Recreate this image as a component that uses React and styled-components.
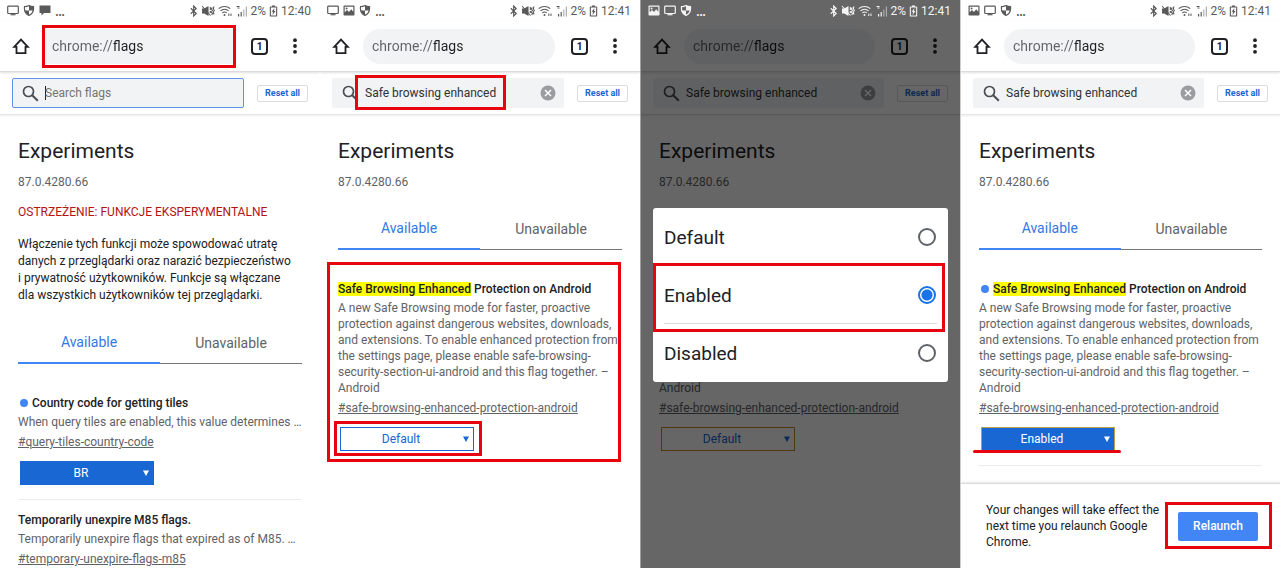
import styled, { createGlobalStyle } from "styled-components";
import { useId, useState } from "react";

function App() {
    return (
        <>
            <GlobalStyle />
            <Board>
                <Screen>
                    <StatusBar icons={["cast", "shield", "chat"]} time="12:40" />
                    <Toolbar marked />
                    <SearchBar value="" />
                    <Content>
                        <h1>Experiments</h1>
                        <Version>87.0.4280.66</Version>
                        <Warning>OSTRZEŻENIE: FUNKCJE EKSPERYMENTALNE</Warning>
                        <Blurb>
                            Włączenie tych funkcji może spowodować utratę danych z przeglądarki oraz
                            narazić bezpieczeństwo i&nbsp;prywatność użytkowników. Funkcje są włączane
                            dla&nbsp;wszystkich użytkowników tej przeglądarki.
                        </Blurb>
                        <Tabs />
                        <Flag>
                            <h2><Dot />Country code for getting tiles</h2>
                            <p>When query tiles are enabled, this value determines …</p>
                            <a href="#query-tiles-country-code">#query-tiles-country-code</a>
                            <FlagSelect value="BR" options={["BR"]} filled />
                        </Flag>
                        <Divider />
                        <Flag $next>
                            <h2>Temporarily unexpire M85 flags.</h2>
                            <p>Temporarily unexpire flags that expired as of M85. …</p>
                            <a href="#temporary-unexpire-flags-m85">#temporary-unexpire-flags-m85</a>
                        </Flag>
                    </Content>
                </Screen>

                <Screen>
                    <StatusBar icons={["cast", "image", "shield"]} time="12:41" />
                    <Toolbar />
                    <SearchBar value="Safe browsing enhanced" marked />
                    <Content>
                        <h1>Experiments</h1>
                        <Version>87.0.4280.66</Version>
                        <Tabs />
                        <SafeBrowsing marked value="Default" />
                    </Content>
                </Screen>

                <Screen $edge="#a0a0a0">
                    <StatusBar icons={["image", "cast", "shield"]} time="12:41" light />
                    <Toolbar />
                    <SearchBar value="Safe browsing enhanced" />
                    <Content>
                        <h1>Experiments</h1>
                        <Version>87.0.4280.66</Version>
                        <Tabs />
                        <SafeBrowsing value="Default" outline="#c98a1c" />
                    </Content>
                    <Scrim>
                        <OptionDialog />
                    </Scrim>
                </Screen>

                <Screen $edge="#cfcfcf">
                    <StatusBar icons={["image", "cast", "shield"]} time="12:41" />
                    <Toolbar />
                    <SearchBar value="Safe browsing enhanced" />
                    <Content>
                        <h1>Experiments</h1>
                        <Version>87.0.4280.66</Version>
                        <Tabs />
                        <SafeBrowsing value="Enabled" outline="#b9a04a" filled changed />
                        <Divider />
                    </Content>
                    <RestartBar>
                        <p>Your changes will take effect the next time you relaunch Google Chrome.</p>
                        <Anchor>
                            <Relaunch>Relaunch</Relaunch>
                            <Mark $inset="-10px -14px -8px -13px" />
                        </Anchor>
                    </RestartBar>
                </Screen>
            </Board>
        </>
    );
}

export default App;

const statusIcons = {
    cast: (
        <svg width="12" height="11" viewBox="0 0 12 11" fill="none" stroke="currentColor">
            <rect x="0.7" y="1.2" width="10.6" height="7.3" rx="0.8" strokeWidth="1.2" />
            <path d="M3.5 9.7h5" strokeWidth="1.2" />
        </svg>
    ),
    shield: (
        <svg width="12" height="11" viewBox="0 0 12 11">
            <path
                d="M6 .6c1.500.9 2.800 1.100 4.500 1.100.5 4.200-1 7.200-4.500 8.700C2.500 8.900 1 5.900 1.500 1.700 3.200 1.700 4.500 1.500 6 .6z"
                fill="none" stroke="currentColor" strokeWidth="1.2"
            />
            <path d="M6 .6v5h4.400C10.700 4.200 10.700 2.800 10.500 1.700 9 1.700 7.400 1.500 6 .6zM6 5.600v4.800C3.500 9.300 2 7.500 1.600 5.600z" fill="currentColor" />
        </svg>
    ),
    chat: (
        <svg width="12" height="11" viewBox="0 0 12 11" fill="currentColor">
            <path d="M.5.500h11v7.500H5L2.500 10.500V8h-2z" />
        </svg>
    ),
    image: (
        <svg width="12" height="11" viewBox="0 0 12 11">
            <path
                fillRule="evenodd" fill="currentColor"
                d="M1.200.5h9.600q.7 0 .7.700v8.600q0 .7-.7.700H1.200q-.7 0-.7-.7V1.200q0-.7.7-.7zM1.700 1.700v5.600L4 5l2 2 2.200-2.800 2.100 2.600V1.700zM3.600 2.400a1 1 0 1 1 0 2 1 1 0 0 1 0-2z"
            />
        </svg>
    ),
};

function StatusBar({ icons, time, light }) {
    return (
        <Status $light={light}>
            <StatusLeft>
                {icons.map(name => <span key={name}>{statusIcons[name]}</span>)}
                <b>…</b>
            </StatusLeft>
            <StatusRight>
                <svg width="8" height="12" viewBox="0 0 8 12" fill="none" stroke="currentColor" strokeWidth="1.2">
                    <path d="M.8 3.200l5.400 5.300L3.700 11V1l2.500 2.500L.8 8.800" />
                </svg>
                <svg width="14" height="12" viewBox="0 0 14 12">
                    <path d="M1 3.500h2.200L7.500 1v10L3.200 8.500H1z" fill="currentColor" />
                    <path d="M1 1l8.500 9.500M9.300 2v3M9.300 6v2M11.200 2.500l-.8 1.500 1 1.500-1 1.500 1 1.500-.7 1.500M13 1.500l-.7 2 .9 2-.9 2 .7 2" fill="none" stroke="currentColor" strokeWidth="1.100" />
                </svg>
                <svg width="15" height="12" viewBox="0 0 15 12" fill="none" stroke="currentColor" strokeWidth="1.1">
                    <path d="M.7 3.700c3.300-3 8.300-3 11.600 0M2.500 5.800c2.300-2 5.700-2 8 0M4.300 7.900c1.300-1.100 3.100-1.100 4.400 0" />
                    <circle cx="6.500" cy="10" r="1" fill="currentColor" stroke="none" />
                    <path d="M10.800 8.500v2.500M13 8.500v2.500" strokeWidth="1" />
                </svg>
                <svg width="12" height="12" viewBox="0 0 12 12" fill="currentColor">
                    <path d="M.5 1h3v1h-3zM1.500 2.500h2v1h-2zM2 9h1.200v2.500H2zM4.600 7h1.200v4.500H4.600z" />
                    <path d="M7.200 4.500h1.200v7H7.200zM9.800 1.500H11v10H9.800z" opacity="0.5" />
                </svg>
                <time>2%</time>
                <svg width="9" height="12" viewBox="0 0 9 12">
                    <path
                        fillRule="evenodd" fill="currentColor"
                        d="M3 .5h3v1h1.500q.7 0 .7.700v8.600q0 .7-.7.700h-6q-.7 0-.7-.7V2.200q0-.7.7-.7H3zM1.900 2.600v7.800h5.200V2.600z"
                    />
                    <path d="M5.500 3L2.600 6.800h1.500L3.500 10l3-3.900H4.900z" fill="currentColor" />
                </svg>
                <time>{time}</time>
            </StatusRight>
        </Status>
    );
}

function Toolbar({ marked }) {
    return (
        <Bar>
            <IconButton aria-label="Home">
                <svg width="18" height="18" viewBox="0 0 18 18" fill="none" stroke="#202124" strokeWidth="1.800">
                    <path d="M2.200 9.800L9 2.600l6.800 7.200h-2.300v6.300h-9V9.800z" />
                </svg>
            </IconButton>
            <Omnibox $square={marked}>
                <input aria-label="Address" defaultValue="chrome://flags" />
                {marked && <Mark $inset="-4px -1px" />}
            </Omnibox>
            <IconButton aria-label="Tabs">
                <TabCount>1</TabCount>
            </IconButton>
            <IconButton aria-label="Menu">
                <svg width="4" height="16" viewBox="0 0 4 16" fill="#202124">
                    <circle cx="2" cy="2.200" r="1.900" />
                    <circle cx="2" cy="8" r="1.900" />
                    <circle cx="2" cy="13.800" r="1.900" />
                </svg>
            </IconButton>
        </Bar>
    );
}

function SearchBar({ value, marked }) {
    const [term, setTerm] = useState(value);

    return (
        <SearchRow>
            <SearchBox $focused={!value}>
                <svg width="17" height="17" viewBox="0 0 17 17" fill="none" stroke="#4a4d51" strokeWidth="1.700">
                    <circle cx="6.500" cy="6.500" r="5" />
                    <path d="M10.200 10.200l5.600 5.600" strokeWidth="2" />
                </svg>
                <Anchor $grow>
                    {!value && <Caret />}
                    <input
                        aria-label="Search flags"
                        placeholder="Search flags"
                        value={term}
                        onChange={(e) => setTerm(e.target.value)}
                    />
                    {marked && <Mark $inset="-10px 28px -9px -10px" />}
                </Anchor>
                {value && (
                    <IconButton aria-label="Clear search" onClick={() => setTerm("")}>
                        <svg width="16" height="16" viewBox="0 0 16 16">
                            <circle cx="8" cy="8" r="7.500" fill="#9a9c9f" />
                            <path d="M5 5l6 6M11 5l-6 6" stroke="#fff" strokeWidth="1.500" />
                        </svg>
                    </IconButton>
                )}
            </SearchBox>
            <ResetButton>Reset all</ResetButton>
        </SearchRow>
    );
}

function Tabs() {
    const [tab, setTab] = useState("Available");

    return (
        <TabList role="tablist">
            {["Available", "Unavailable"].map(name => (
                <Tab key={name} role="tab" aria-selected={tab === name} $active={tab === name} onClick={() => setTab(name)}>
                    {name}
                </Tab>
            ))}
        </TabList>
    );
}

function SafeBrowsing({ value, marked, filled, changed, outline }) {
    return (
        <Flag>
            <h2>
                {changed && <Dot />}
                <mark>Safe Browsing Enhanced</mark> Protection on Android
            </h2>
            <p>
                A new Safe Browsing mode for faster, proactive protection against dangerous websites,
                downloads, and extensions. To enable enhanced protection from the settings page, please
                enable safe-browsing-security-section-ui-android and this flag together. – Android
            </p>
            <a href="#safe-browsing-enhanced-protection-android">#safe-browsing-enhanced-protection-android</a>
            <FlagSelect
                value={value}
                options={["Default", "Enabled", "Disabled"]}
                filled={filled}
                outline={outline}
                marked={marked}
                underlined={changed}
            />
            {marked && <Mark $inset="-18px 1px -11px -11px" />}
        </Flag>
    );
}

function FlagSelect({ value, options, filled, outline, marked, underlined }) {
    return (
        <SelectWrap $filled={filled}>
            <select aria-label="Flag state" defaultValue={value} style={{ borderColor: outline }}>
                {options.map(option => <option key={option}>{option}</option>)}
            </select>
            <svg width="6" height="6" viewBox="0 0 6 6" fill="currentColor">
                <path d="M0 .5h6L3 6z" />
            </svg>
            {marked && <Mark $inset="-6px -8px -5px -6px" />}
            {underlined && <Underline />}
        </SelectWrap>
    );
}

function OptionDialog() {
    const [selected, setSelected] = useState("Enabled");
    const id = useId();

    return (
        <Dialog role="dialog" aria-label="Flag state">
            {["Default", "Enabled", "Disabled"].map(option => (
                <Option key={option}>
                    <span>{option}</span>
                    <input
                        type="radio"
                        name={id}
                        checked={selected === option}
                        onChange={() => setSelected(option)}
                    />
                    {option === "Enabled" && <Mark $inset="-3px 3px -8px 0" />}
                </Option>
            ))}
        </Dialog>
    );
}

const GlobalStyle = createGlobalStyle`
    * {
        box-sizing: border-box;
    }
    body {
        margin: 0;
        background-color: #fff;
        color: #202124;
        font-family: Roboto, "Liberation Sans", sans-serif;
        font-size: 12px;
    }
    h1, h2, p {
        margin: 0;
    }
    button, input, select {
        font: inherit;
    }
    svg {
        display: block;
        flex-shrink: 0;
    }
`;

const Board = styled.main`
    display: grid;
    grid-template-columns: repeat(4, 1fr);
    min-height: 100vh;
`;

const Screen = styled.section`
    position: relative;
    display: flex;
    flex-direction: column;
    min-width: 0;
    overflow: clip;
    background-color: #fff;
    border-left: ${(props) => (props.$edge ? `1px solid ${props.$edge}` : "none")};
`;

const Status = styled.div`
    position: relative;
    z-index: 3;
    height: 21px;
    padding: 0 9px 0 7px;
    display: flex;
    justify-content: space-between;
    align-items: center;
    color: ${(props) => (props.$light ? "#f4f4f4" : "#5a5a5a")};
`;

const StatusLeft = styled.div`
    display: flex;
    align-items: center;
    gap: 4px;

    b {
        font-size: 14px;
        font-weight: 500;
        line-height: 16px;
    }
`;

const StatusRight = styled.div`
    display: flex;
    align-items: center;
    gap: 3px;
`;

const Bar = styled.header`
    height: 51px;
    padding: 0 23px 0 12px;
    display: flex;
    align-items: center;
    border-bottom: 1px solid #dcdcdc;
    box-shadow: 0 1px 2px rgba(0, 0, 0, 0.12);
`;

const IconButton = styled.button`
    display: flex;
    align-items: center;
    justify-content: center;
    padding: 0;
    border: 0;
    background: none;
    cursor: pointer;
`;

const Omnibox = styled.div`
    position: relative;
    flex: 1;
    min-width: 0;
    height: 35px;
    margin: 0 16px 0 13px;
    padding: 0 9px;
    display: flex;
    align-items: center;
    border-radius: ${(props) => (props.$square ? "0" : "18px")};
    background-color: #f1f3f4;

    input {
        width: 100%;
        padding: 0;
        border: 0;
        outline: 0;
        font-size: 14px;
        color: #202124;
        background: linear-gradient(to right, #5f6368 62px, #202124 62px);
        background-clip: text;
        -webkit-text-fill-color: transparent;
    }
`;

const TabCount = styled.span`
    width: 17px;
    height: 17px;
    margin-right: 25px;
    display: flex;
    align-items: center;
    justify-content: center;
    border: 2px solid #202124;
    border-radius: 4px;
    font-size: 10px;
    font-weight: 700;
    color: #202124;
`;

const SearchRow = styled.div`
    height: 43px;
    padding: 0 12px;
    display: flex;
    align-items: center;
    gap: 13px;
    border-bottom: 1px solid #e4e4e4;
    box-shadow: 0 1px 2px rgba(0, 0, 0, 0.08);
`;

const SearchBox = styled.div`
    flex: 1;
    min-width: 0;
    height: 30px;
    padding: 0 7px 0 9px;
    display: flex;
    align-items: center;
    gap: 6px;
    border: 1px solid ${(props) => (props.$focused ? "#5b96e6" : "#f1f3f4")};
    border-radius: 2px;
    background-color: #f1f3f4;

    input {
        width: 100%;
        height: 16px;
        padding: 0;
        border: 0;
        outline: 0;
        background: none;
        color: #303134;
    }
    input::placeholder {
        color: #757575;
    }
`;

const Caret = styled.i`
    width: 1px;
    height: 14px;
    margin-right: -1px;
    background-color: #202124;
`;

const Anchor = styled.div`
    position: relative;
    display: flex;
    align-items: center;
    flex: ${(props) => (props.$grow ? "1" : "none")};
    min-width: 0;
`;

const ResetButton = styled.button`
    height: 17px;
    padding: 0 7px;
    border: 1px solid #dadce0;
    border-radius: 2px;
    background-color: transparent;
    color: #1967d2;
    font-size: 9px;
    font-weight: 700;
    line-height: 15px;
    white-space: nowrap;
`;

const Content = styled.div`
    padding: 22px 18px 0;

    h1 {
        font-size: 21px;
        font-weight: 400;
        line-height: 28px;
    }
`;

const Version = styled.p`
    margin-top: 9px;
    line-height: 16px;
    color: #5f6368;
`;

const Warning = styled.p`
    margin-top: 14px;
    line-height: 16px;
    color: #b31412;
`;

const Blurb = styled.p`
    margin-top: 16px;
    line-height: 17px;
`;

const TabList = styled.div`
    margin-top: 20px;
    display: grid;
    grid-template-columns: 1fr 1fr;
`;

const Tab = styled.button`
    height: 40px;
    padding: 0 0 2px;
    border: 0;
    border-bottom: ${(props) => (props.$active ? "2px solid #4285f4" : "1px solid #777")};
    background: none;
    color: ${(props) => (props.$active ? "#3478e5" : "#5f6368")};
    font-size: 14px;
`;

const Flag = styled.article`
    position: relative;
    margin-top: ${(props) => (props.$next ? "11px" : "30px")};

    h2 {
        display: flex;
        align-items: center;
        font-size: 12px;
        font-weight: 500;
        line-height: 18px;
        white-space: pre;
    }
    mark {
        line-height: 14px;
        background-color: #ff0;
        color: inherit;
    }
    p {
        margin-top: 2px;
        line-height: 16px;
        color: #5f6368;
    }
    a {
        display: block;
        margin-top: 4px;
        line-height: 16px;
        color: #5f6368;
    }
`;

const Dot = styled.span`
    width: 8px;
    height: 8px;
    margin: 0 4px 0 2px;
    border-radius: 50%;
    background-color: #4285f4;
`;

const SelectWrap = styled.div`
    position: relative;
    width: 134px;
    height: 24px;
    margin: 11px 0 0 2px;
    display: flex;
    align-items: center;
    color: ${(props) => (props.$filled ? "#fff" : "#1967d2")};

    select {
        appearance: none;
        width: 100%;
        height: 100%;
        padding: 0 12px 0 0;
        border: 1px solid #1967d2;
        border-radius: 0;
        background-color: ${(props) => (props.$filled ? "#1967d2" : "transparent")};
        color: inherit;
        text-align: center;
        text-align-last: center;
    }
    > svg {
        position: absolute;
        right: 5px;
        pointer-events: none;
    }
`;

const Divider = styled.hr`
    margin: 14px 0 0;
    border: 0;
    border-top: 1px solid #ececec;
`;

const Scrim = styled.div`
    position: absolute;
    inset: 0;
    z-index: 2;
    padding: 22px 12px 0;
    display: flex;
    align-items: center;
    background-color: rgba(0, 0, 0, 0.6);
`;

const Dialog = styled.div`
    width: 100%;
    border-radius: 3px;
    background-color: #fff;
`;

const Option = styled.label`
    position: relative;
    height: 58px;
    padding: 0 12px 0 11px;
    display: flex;
    justify-content: space-between;
    align-items: center;
    font-size: 19px;

    &:not(:last-child)::before {
        content: "";
        position: absolute;
        inset: auto 11px 0 11px;
        border-top: 1px solid #dcdcdc;
    }
    input {
        appearance: none;
        width: 18px;
        height: 18px;
        margin: 0;
        border: 2px solid #5f6368;
        border-radius: 50%;
    }
    input:checked {
        border-color: #1a73e8;
        background: radial-gradient(circle, #1a73e8 5px, transparent 6px);
    }
`;

const RestartBar = styled.footer`
    margin-top: auto;
    height: 85px;
    padding: 0 22px 0 25px;
    display: flex;
    align-items: center;
    justify-content: space-between;
    gap: 12px;
    border-top: 1px solid #dcdcdc;
    box-shadow: 0 -1px 2px rgba(0, 0, 0, 0.1);

    p {
        line-height: 16px;
    }
`;

const Relaunch = styled.button`
    height: 29px;
    width: 80px;
    padding: 0;
    border: 0;
    border-radius: 2px;
    background-color: #4285f4;
    color: #fff;
    font-weight: 500;
`;

// red annotation frame drawn over whatever it sits in
const Mark = styled.span`
    position: absolute;
    inset: ${(props) => props.$inset};
    z-index: 1;
    border: 3px solid #e8040f;
    pointer-events: none;
`;

const Underline = styled.span`
    position: absolute;
    inset: auto -6px -2px -8px;
    height: 3px;
    border-radius: 2px;
    background-color: #e8040f;
`;
